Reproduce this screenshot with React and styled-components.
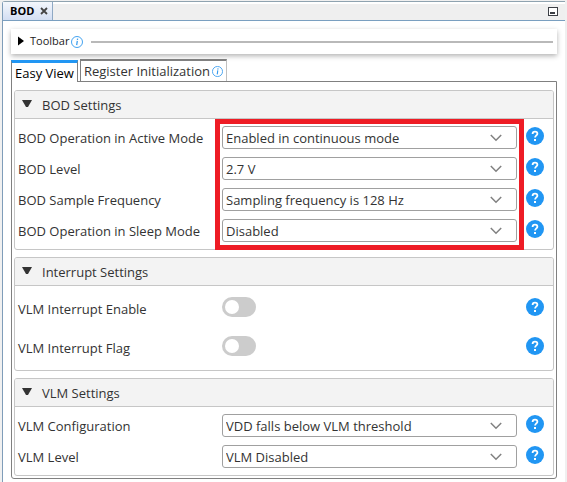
import React, { useId, useState } from "react";
import styled, { createGlobalStyle } from "styled-components";

const GlobalStyle = createGlobalStyle`
  *, *::before, *::after { box-sizing: border-box; }
  body {
    margin: 0;
    background: #f0f0f0;
    color: #333;
    font: 13px/20px "Open Sans", "Noto Sans", sans-serif;
  }
  button, select { font: inherit; color: inherit; }
`;

const Window = styled.div`
  min-height: 100vh;
  padding: 1px 2px 0;
`;

const Frame = styled.div`
  min-height: calc(100vh - 1px);
  display: flex;
  flex-direction: column;
  background: #fff;
  border-top: 1px solid #8fa3b0;
  border-left: 1px solid #7f9db9;
  border-top-left-radius: 3px;
`;

const EditorBar = styled.header`
  display: flex;
  align-items: stretch;
  justify-content: space-between;
  height: 19px;
  background: linear-gradient(#fff 2px, #efefef 2px);
  border-bottom: 1px solid #7a9fc0;
`;

const EditorTab = styled.div`
  display: flex;
  align-items: center;
  gap: 6px;
  padding: 0 4px 0 7px;
  background: linear-gradient(#f4f7fc, #d3def3);
  border-right: 1px solid #8fa9c4;
  color: #000;
  font-size: 11px;
  font-weight: 700;
  line-height: 16px;
`;

const IconButton = styled.button`
  display: grid;
  place-items: center;
  padding: 0;
  border: 0;
  background: none;
`;

const MinimizeButton = styled(IconButton)`
  margin-right: 7px;
`;

const Content = styled.main`
  padding: 8px 8px 0;
`;

const Toolbar = styled.div`
  display: flex;
  align-items: center;
  height: 25px;
  padding: 0 4px 0 7px;
  background: #fff;
  box-shadow: 0 2px 5px rgba(0, 0, 0, 0.3);
`;

const ToolbarToggle = styled.button`
  display: flex;
  align-items: center;
  gap: 6px;
  padding: 0 0 1px;
  border: 0;
  background: none;
  color: #222;
  font-size: 11px;
  line-height: 16px;
`;

const ToolbarInfo = styled.span`
  display: grid;
  margin: 0 8px 0 2px;
`;

const TabInfo = styled.span`
  display: grid;
`;

const ToolbarRule = styled.hr`
  flex: 1;
  height: 2px;
  margin: 0;
  border: 0;
  background: #b9b9b9;
`;

const TabList = styled.div`
  display: flex;
  align-items: stretch;
  gap: 2px;
  margin-top: 5px;
  height: 22px;
`;

const Tab = styled.button`
  display: flex;
  align-items: center;
  gap: 2px;
  padding: 0 3px;
  border: 1px solid ${(p) => (p.$active ? "#808080" : "#c0c0c0")};
  border-top: ${(p) => (p.$active ? "3px solid #2196f3" : "2px solid #808080")};
  border-left-color: #808080;
  border-bottom: 0;
  background: #fff;
  color: ${(p) => (p.$active ? "#000" : "#333")};
  line-height: 18px;
  white-space: nowrap;
  z-index: 1;
  margin: ${(p) => (p.$active ? "1px 0 -1px" : "0")};
`;

const Panel = styled.div`
  display: flex;
  flex-direction: column;
  gap: 7px;
  padding: 8px 2px 2px;
  border: 1px solid #808080;
  border-radius: 0 0 3px 3px;
`;

const Group = styled.section`
  border: 1px solid #c6c6c6;
  border-radius: 3px;
`;

const GroupHeader = styled.h2`
  margin: 0;
  font-size: 13px;
  font-weight: 400;
  background: #f3f3f3;
  border-bottom: 1px solid #c6c6c6;
  border-radius: 2px 2px 0 0;
`;

const GroupToggle = styled.button`
  display: flex;
  align-items: flex-start;
  gap: 10px;
  width: 100%;
  height: 27px;
  padding: 4px 7px 0;
  border: 0;
  background: none;
  text-align: left;
`;

const Rows = styled.div`
  position: relative;
  display: grid;
  gap: ${(p) => (p.$roomy ? "19px" : "8px")};
  padding: ${(p) => (p.$roomy ? "11px 9px 14px 3px" : "7px 9px 7px 3px")};
`;

const Row = styled.div`
  display: grid;
  grid-template-columns: 204px minmax(0, 1fr) 18px;
  align-items: start;
  height: ${(p) => (p.$toggle ? "20px" : "23px")};
`;

const FieldLabel = styled.label`
  padding-top: 2px;
  white-space: nowrap;
`;

const SelectBox = styled.div`
  display: grid;
  align-items: center;
  margin-right: 9px;

  > * { grid-area: 1 / 1; }
  > svg { justify-self: end; margin-right: 15px; pointer-events: none; }
`;

const Select = styled.select`
  appearance: none;
  width: 100%;
  height: 23px;
  padding: 1px 32px 0 3px;
  border: 1px solid #a0a0a0;
  border-radius: 3px;
  background: #fff;
`;

const Switch = styled.input`
  appearance: none;
  display: flex;
  align-items: center;
  justify-content: ${(p) => (p.checked ? "flex-end" : "flex-start")};
  width: 34px;
  height: 20px;
  margin: 0;
  padding: 0 3px;
  border-radius: 10px;
  background: ${(p) => (p.checked ? "#2196f3" : "#ccc")};

  &::before {
    content: "";
    width: 14px;
    height: 14px;
    border-radius: 50%;
    background: #fff;
  }
`;

const HelpButton = styled(IconButton)`
  margin-top: 1px;
`;

const Highlight = styled.div`
  position: absolute;
  inset: 0 29px -1px 200px;
  border: 5px solid #ee1c25;
  pointer-events: none;
`;

const InfoIcon = ({ size }) => (
  <svg width={size} height={size} viewBox="0 0 12 12" fill="none" stroke="#2f98ee" role="img" aria-label="Information">
    <circle cx="6" cy="6" r="5.5" strokeWidth="0.9" />
    <path d="M6.3 4.8 L5.7 9.2" strokeWidth="1.2" />
    <path d="M6.6 2.6 L6.4 3.8" strokeWidth="1.3" />
  </svg>
);

const HelpIcon = () => (
  <svg width="18" height="18" viewBox="0 0 18 18" fill="none" aria-hidden="true">
    <circle cx="9" cy="9" r="9" fill="#2196f3" />
    <path d="M6.6 7C6.6 5.5 7.5 4.7 9 4.7c1.5 0 2.4.8 2.4 2 0 1.7-2.3 1.8-2.3 3.9" stroke="#fff" strokeWidth="1.8" />
    <rect x="8" y="12" width="2" height="2" fill="#fff" />
  </svg>
);

const Chevron = () => (
  <svg width="12" height="8" viewBox="0 0 12 8" fill="none" stroke="#808080" strokeWidth="1.5" aria-hidden="true">
    <path d="M0.8 1 L6 6.2 L11.2 1" />
  </svg>
);

const GroupArrow = ({ open }) => (
  <svg width="10" height="14" viewBox="0 0 10 14" fill="#333" aria-hidden="true">
    <path d={open ? "M0 5H10L6 12H4Z" : "M2 3V13L9 8Z"} />
  </svg>
);

function SelectField({ label, options }) {
  const id = useId();
  const [value, setValue] = useState(options[0]);
  return (
    <Row>
      <FieldLabel htmlFor={id}>{label}</FieldLabel>
      <SelectBox>
        <Select id={id} value={value} onChange={(e) => setValue(e.target.value)}>
          {options.map((o) => (
            <option key={o}>{o}</option>
          ))}
        </Select>
        <Chevron />
      </SelectBox>
      <HelpButton type="button" aria-label={`Help: ${label}`}>
        <HelpIcon />
      </HelpButton>
    </Row>
  );
}

function SwitchField({ label }) {
  const id = useId();
  const [on, setOn] = useState(false);
  return (
    <Row $toggle>
      <FieldLabel htmlFor={id}>{label}</FieldLabel>
      <Switch id={id} type="checkbox" role="switch" checked={on} onChange={(e) => setOn(e.target.checked)} />
      <HelpButton type="button" aria-label={`Help: ${label}`}>
        <HelpIcon />
      </HelpButton>
    </Row>
  );
}

function SettingsGroup({ title, roomy, highlighted, children }) {
  const [open, setOpen] = useState(true);
  return (
    <Group>
      <GroupHeader>
        <GroupToggle type="button" aria-expanded={open} onClick={() => setOpen(!open)}>
          <GroupArrow open={open} />
          {title}
        </GroupToggle>
      </GroupHeader>
      {open && (
        <Rows $roomy={roomy}>
          {children}
          {highlighted && <Highlight />}
        </Rows>
      )}
    </Group>
  );
}

export default function App() {
  return (
    <Window>
      <GlobalStyle />
      <Frame>
        <EditorBar>
          <EditorTab>
            BOD
            <IconButton type="button" aria-label="Close">
              <svg width="8" height="8" viewBox="0 0 8 8" stroke="#444" strokeWidth="1.8" aria-hidden="true">
                <path d="M1 1 L7 7 M7 1 L1 7" />
              </svg>
            </IconButton>
          </EditorTab>
          <MinimizeButton type="button" aria-label="Minimize">
            <svg width="10" height="9" viewBox="0 0 10 9" aria-hidden="true">
              <rect x="0.5" y="0.5" width="9" height="8" fill="#fff" stroke="#3c3f45" />
              <rect x="2" y="5" width="5" height="2" fill="#3c3f45" />
            </svg>
          </MinimizeButton>
        </EditorBar>
        <Content>
          <Toolbar>
            <ToolbarToggle type="button" aria-expanded="false">
              <svg width="6" height="10" viewBox="0 0 6 10" aria-hidden="true">
                <path d="M0 0.5 L6 5 L0 9.5Z" fill="#000" />
              </svg>
              Toolbar
            </ToolbarToggle>
            <ToolbarInfo>
              <InfoIcon size={12} />
            </ToolbarInfo>
            <ToolbarRule />
          </Toolbar>
          <TabList role="tablist">
            <Tab type="button" role="tab" aria-selected="true" $active>
              Easy View
            </Tab>
            <Tab type="button" role="tab" aria-selected="false">
              Register Initialization
              <TabInfo>
                <InfoIcon size={11} />
              </TabInfo>
            </Tab>
          </TabList>
          <Panel role="tabpanel">
            <SettingsGroup title="BOD Settings" highlighted>
              <SelectField
                label="BOD Operation in Active Mode"
                options={["Enabled in continuous mode", "Disabled"]}
              />
              <SelectField label="BOD Level" options={["2.7 V"]} />
              <SelectField label="BOD Sample Frequency" options={["Sampling frequency is 128 Hz"]} />
              <SelectField label="BOD Operation in Sleep Mode" options={["Disabled"]} />
            </SettingsGroup>
            <SettingsGroup title="Interrupt Settings" roomy>
              <SwitchField label="VLM Interrupt Enable" />
              <SwitchField label="VLM Interrupt Flag" />
            </SettingsGroup>
            <SettingsGroup title="VLM Settings">
              <SelectField label="VLM Configuration" options={["VDD falls below VLM threshold"]} />
              <SelectField label="VLM Level" options={["VLM Disabled"]} />
            </SettingsGroup>
          </Panel>
        </Content>
      </Frame>
    </Window>
  );
}
